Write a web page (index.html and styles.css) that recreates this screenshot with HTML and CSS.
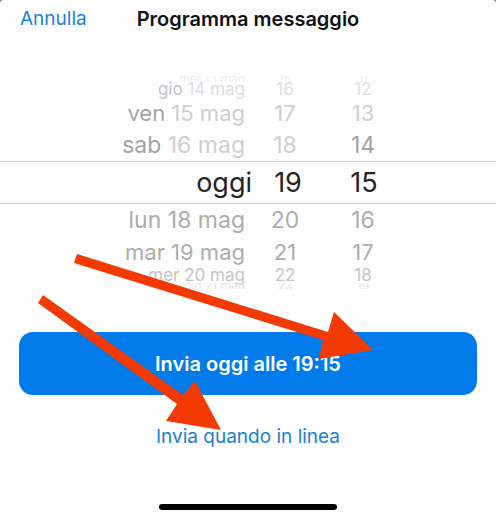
FILE: index.html
```html
<!DOCTYPE html>
<html lang="it">
<head>
<meta charset="utf-8">
<meta name="viewport" content="width=device-width, initial-scale=1">
<title>Programma messaggio</title>
<link rel="stylesheet" href="styles.css">
</head>
<body>
<main class="sheet">
  <header class="bar">
    <button class="link cancel" type="button">Annulla</button>
    <h1 class="title">Programma messaggio</h1>
  </header>
  <section class="wheel">
    <div class="row edge"><span class="day"><span class="near">mer</span> 13 mag</span><span>15</span><span>11</span></div>
    <div class="row far"><span class="day"><span class="near">gio</span> 14 mag</span><span>16</span><span>12</span></div>
    <div class="row mid"><span class="day"><span class="near">ven</span> 15 mag</span><span>17</span><span>13</span></div>
    <div class="row next"><span class="day"><span class="near">sab</span> 16 mag</span><span>18</span><span class="near">14</span></div>
    <div class="row selected"><span class="day">oggi</span><span>19</span><span>15</span></div>
    <div class="row next below"><span class="day">lun 18 mag</span><span>20</span><span>16</span></div>
    <div class="row mid below"><span class="day">mar 19 mag</span><span>21</span><span>17</span></div>
    <div class="row far below"><span class="day">mer 20 mag</span><span>22</span><span>18</span></div>
    <div class="row edge below"><span class="day">gio 21 mag</span><span>23</span><span>19</span></div>
  </section>
  <div class="actions">
    <button class="send" type="button">Invia oggi alle 19:15</button>
    <button class="link online" type="button">Invia quando in linea</button>
  </div>
  <div class="home"></div>
  <svg class="arrows" width="496" height="520" viewBox="0 0 496 520" aria-hidden="true">
    <path d="M77 254L328 332L334 312L373 350L319 359L323 340L74 263Z"/>
    <path d="M43 295L183 395L195 381L221 430L166 421L177 404L38 303Z"/>
  </svg>
</main>
</body>
</html>
```
FILE: styles.css
```css
* {
  box-sizing: border-box;
}

body {
  margin: 0;
  background: #8a8a8a;
  font-family: Inter, "Liberation Sans", sans-serif;
}

.sheet {
  position: relative;
  display: flex;
  flex-direction: column;
  min-height: 100vh;
  overflow: hidden;
  background: #fefefe;
  border-radius: 4px 4px 0 0;
}

.bar {
  display: grid;
  grid-template-columns: 1fr auto 1fr;
  align-items: center;
  height: 76px;
  padding: 0 20px 38px;
}

.link {
  padding: 0;
  border: 0;
  background: none;
  color: #1c7fd6;
  font: 400 19px/24px Inter, "Liberation Sans", sans-serif;
}

.cancel {
  justify-self: start;
}

.title {
  margin: 0;
  color: #111;
  font-size: 20px;
  font-weight: 600;
  line-height: 24px;
}

.wheel {
  display: flex;
  flex-direction: column;
}

.row {
  display: grid;
  grid-template-columns: 245fr 80fr 76fr 95fr;
  align-items: center;
  height: 32px;
  color: #cfcfcf;
  font-size: 23px;
  line-height: 28px;
  text-align: center;
  white-space: nowrap;
}

.day {
  text-align: right;
}

.near {
  color: #a3a3a3;
}

.below {
  color: #adadad;
}

.mid {
  font-size: 22px;
}

.far {
  height: 15px;
  font-size: 17px;
  line-height: 15px;
}

.far:not(.below) {
  color: #dedede;
}

.far .near {
  color: #c4c4c4;
}

.far.below {
  color: #c4c4c4;
}

.edge {
  height: 6px;
  overflow: hidden;
  font-size: 12px;
  line-height: 6px;
}

.edge,
.edge .near {
  color: #eee;
}

.edge.below {
  color: #e4e4e4;
}

.selected {
  grid-template-columns: 252fr 72fr 80fr 92fr;
  height: 43px;
  border: solid #d4d4d4;
  border-width: 1px 0;
  color: #252525;
  font-size: 27px;
}

.actions {
  display: flex;
  flex-direction: column;
  align-items: center;
  gap: 30px;
  padding: 43px 19px 0;
}

.send {
  width: 100%;
  height: 63px;
  border: 0;
  border-radius: 14px;
  background: #017bea;
  color: #fff;
  font: 600 20px/24px Inter, "Liberation Sans", sans-serif;
}

.home {
  width: 36%;
  height: 6px;
  margin: auto auto 10px;
  border-radius: 3px;
  background: #000;
}

.arrows {
  position: absolute;
  top: 0;
  left: 0;
  fill: #f43a04;
  pointer-events: none;
}
```
